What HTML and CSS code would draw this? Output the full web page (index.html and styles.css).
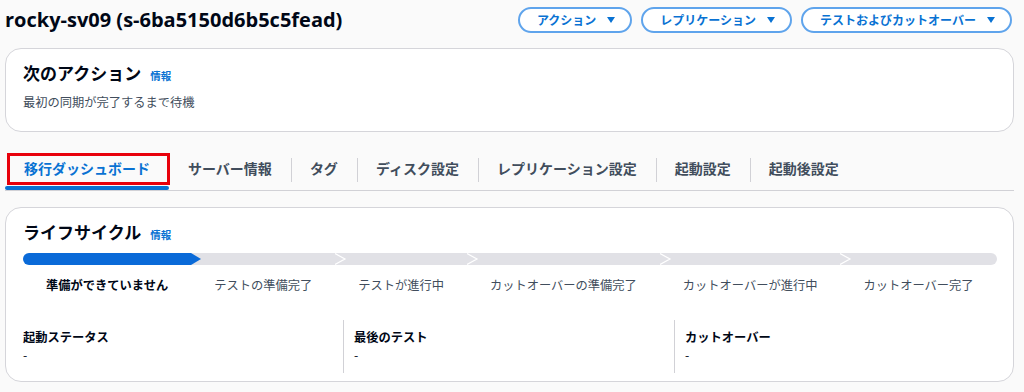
FILE: index.html
```html
<!DOCTYPE html>
<html lang="ja">
<head>
<meta charset="utf-8">
<title>rocky-sv09</title>
<link rel="stylesheet" href="styles.css">
</head>
<body>
<div class="page">
  <header class="head">
    <h1 class="title">rocky-sv09 (s-6ba5150d6b5c5fead)</h1>
    <div class="actions">
      <button class="btn">アクション<svg class="caret" width="8" height="6" viewBox="0 0 8 6"><path d="M0 0H8L4 6Z" fill="#0972d3"/></svg></button>
      <button class="btn">レプリケーション<svg class="caret" width="8" height="6" viewBox="0 0 8 6"><path d="M0 0H8L4 6Z" fill="#0972d3"/></svg></button>
      <button class="btn">テストおよびカットオーバー<svg class="caret" width="8" height="6" viewBox="0 0 8 6"><path d="M0 0H8L4 6Z" fill="#0972d3"/></svg></button>
    </div>
  </header>

  <section class="card card-next">
    <h2 class="card-title">次のアクション<a class="info">情報</a></h2>
    <p class="card-text">最初の同期が完了するまで待機</p>
  </section>

  <nav class="tabs">
    <div class="tab active">移行ダッシュボード</div>
    <div class="tab">サーバー情報</div>
    <div class="tab sep">タグ</div>
    <div class="tab sep">ディスク設定</div>
    <div class="tab sep">レプリケーション設定</div>
    <div class="tab sep">起動設定</div>
    <div class="tab sep">起動後設定</div>
  </nav>

  <section class="card card-life">
    <h2 class="card-title">ライフサイクル<a class="info">情報</a></h2>
    <div class="steps">
      <div class="step current"><div class="seg first"></div><div class="label">準備ができていません</div></div>
      <div class="step"><div class="seg"></div><div class="label">テストの準備完了</div></div>
      <div class="step"><div class="seg"><svg class="chev" width="12" height="12" viewBox="0 0 12 12"><path d="M0 0.5L10 6L0 11.5" fill="none" stroke="#fff" stroke-width="1.2"/></svg></div><div class="label">テストが進行中</div></div>
      <div class="step"><div class="seg"><svg class="chev" width="12" height="12" viewBox="0 0 12 12"><path d="M0 0.5L10 6L0 11.5" fill="none" stroke="#fff" stroke-width="1.2"/></svg></div><div class="label">カットオーバーの準備完了</div></div>
      <div class="step"><div class="seg"><svg class="chev" width="12" height="12" viewBox="0 0 12 12"><path d="M0 0.5L10 6L0 11.5" fill="none" stroke="#fff" stroke-width="1.2"/></svg></div><div class="label">カットオーバーが進行中</div></div>
      <div class="step"><div class="seg last"><svg class="chev" width="12" height="12" viewBox="0 0 12 12"><path d="M0 0.5L10 6L0 11.5" fill="none" stroke="#fff" stroke-width="1.2"/></svg></div><div class="label">カットオーバー完了</div></div>
    </div>
    <div class="kv">
      <div class="kv-col"><div class="kv-label">起動ステータス</div><div class="kv-value">-</div></div>
      <div class="kv-col divided"><div class="kv-label">最後のテスト</div><div class="kv-value">-</div></div>
      <div class="kv-col divided"><div class="kv-label">カットオーバー</div><div class="kv-value">-</div></div>
    </div>
  </section>
</div>
</body>
</html>
```

FILE: styles.css
```css
* { box-sizing: border-box; }

html, body {
  margin: 0;
  padding: 0;
  background: #fafafa;
}

body {
  font-family: "Open Sans", "Noto Sans CJK JP", sans-serif;
  color: #000716;
}

.page {
  margin: 0 10px 0 5px;
}

.head {
  display: flex;
  justify-content: space-between;
  align-items: center;
  height: 33px;
  padding-top: 7px;
  margin-bottom: 15px;
}

.title {
  margin: 0;
  font-size: 20px;
  font-weight: 700;
  line-height: 26px;
}

.actions {
  display: flex;
  gap: 9px;
  margin-right: 2px;
}

.btn {
  display: flex;
  align-items: center;
  height: 26px;
  padding: 0 15px 0 17px;
  border: 2px solid #5fa4ec;
  border-radius: 13px;
  background: #ffffff;
  color: #0972d3;
  font-family: "Noto Sans CJK JP", sans-serif;
  font-size: 12px;
  font-weight: 700;
  line-height: 16px;
}

.caret {
  margin-left: 11px;
  display: block;
}

.card {
  background: #ffffff;
  border: 1px solid #d5d5da;
  border-radius: 16px;
  padding: 12px 17px 0 17px;
}

.card-next {
  height: 84px;
}

.card-life {
  padding-bottom: 8px;
}

.card-title {
  margin: 0;
  height: 24px;
  font-family: "Noto Sans CJK JP", sans-serif;
  font-size: 17px;
  font-weight: 700;
  line-height: 24px;
}

.info {
  margin-left: 9px;
  font-size: 10.5px;
  font-weight: 700;
  line-height: 10px;
  color: #0972d3;
}

.card-text {
  margin: 8px 0 0 0;
  font-family: "Noto Sans CJK JP", sans-serif;
  font-size: 12.25px;
  line-height: 18px;
  color: #414d5c;
}

.tabs {
  display: flex;
  margin-top: 20px;
  margin-bottom: 16px;
  border-bottom: 1px solid #d1d1d6;
  height: 39px;
}

.tab {
  position: relative;
  padding: 6px 19px 0 19px;
  font-family: "Noto Sans CJK JP", sans-serif;
  font-size: 14px;
  font-weight: 700;
  line-height: 20px;
  color: #414d5c;
  white-space: nowrap;
}

.tab.sep::before {
  content: "";
  position: absolute;
  left: 0;
  top: 6px;
  height: 24px;
  border-left: 1px solid #d1d1d6;
}

.tab.active {
  color: #0972d3;
}

.tab.active::before {
  content: "";
  position: absolute;
  left: 0;
  right: 0;
  bottom: 0;
  height: 4px;
  border-radius: 2px;
  background: #0972d3;
}

.tab.active::after {
  content: "";
  position: absolute;
  left: 2px;
  right: -1px;
  top: 1px;
  bottom: 5px;
  border: 3px solid #e8000b;
}

.steps {
  display: flex;
  margin-top: 9px;
}

.step {
  flex: 1 1 auto;
  display: flex;
  flex-direction: column;
}

.seg {
  position: relative;
  height: 12px;
  background: #e1e1e6;
}

.seg.first {
  border-radius: 6px 0 0 6px;
}

.seg.last {
  border-radius: 0 6px 6px 0;
}

.step.current .seg {
  background: #0a6ad8;
  z-index: 1;
}

.step.current .seg::after {
  content: "";
  position: absolute;
  right: -10px;
  top: 0;
  border-left: 10px solid #0a6ad8;
  border-top: 6px solid transparent;
  border-bottom: 6px solid transparent;
}

.chev {
  position: absolute;
  left: 0;
  top: 0;
  display: block;
}

.label {
  margin-top: 11px;
  height: 18px;
  padding: 0 23px;
  font-family: "Noto Sans CJK JP", sans-serif;
  font-size: 12.25px;
  line-height: 18px;
  color: #414d5c;
  white-space: nowrap;
  text-align: center;
}

.step.current .label {
  font-weight: 700;
  color: #000716;
}

.kv {
  display: grid;
  grid-template-columns: 320px 331px 1fr;
  margin-top: 26px;
}

.kv-col {
  padding: 8px 0 9px 0;
  font-family: "Noto Sans CJK JP", sans-serif;
  font-size: 12.25px;
  line-height: 18px;
}

.kv-col.divided {
  border-left: 1px solid #d1d1d6;
  padding-left: 10px;
}

.kv-label {
  height: 18px;
  font-weight: 700;
  color: #000716;
}

.kv-value {
  height: 18px;
  color: #000716;
}
```
